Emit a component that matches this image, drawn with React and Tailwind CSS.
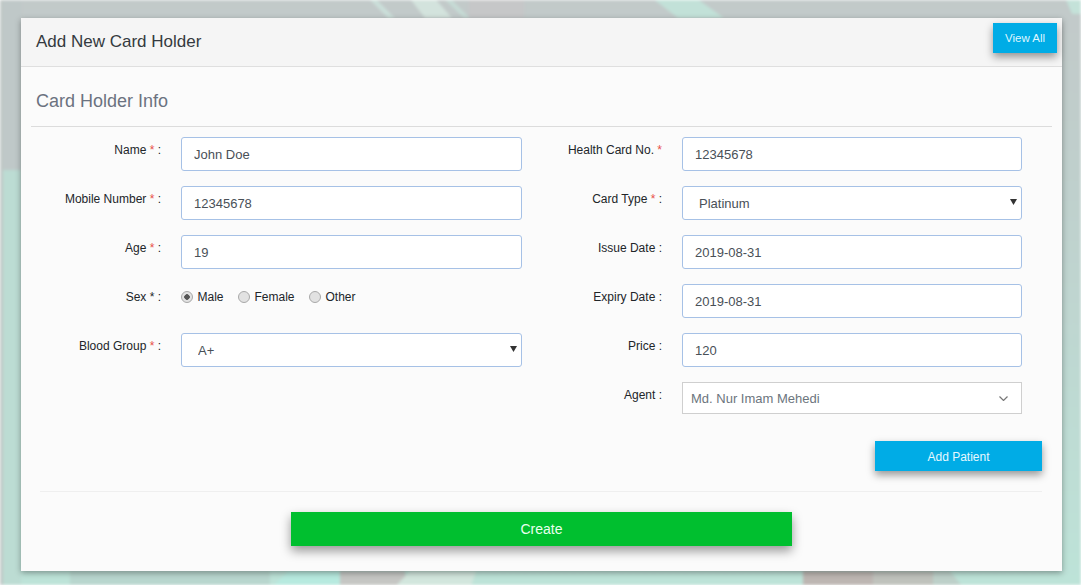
const inputClass =
  "h-[34px] w-full rounded-[3px] border border-[#a6c1e6] bg-white px-[12px] text-[13px] text-[#495057] outline-none";
const selectClass =
  "h-[34px] w-full appearance-none rounded-[3px] border border-[#a6c1e6] bg-white pl-[16px] pr-[24px] pt-[1px] text-[13px] text-[#495057] outline-none";
const labelClass = "pt-[5px] text-right text-[12px] leading-[16px] text-[#212529]";

function Star() {
  return <span className="text-[#e8504a]">*</span>;
}

function Row({ label, star, colon = true, children, className = "mb-[15px]", width = "w-[341px]" }) {
  return (
    <div className={`flex ${className}`}>
      <label className={`w-[130px] shrink-0 ${labelClass}`}>
        {label} {star && <Star />}
        {colon && " :"}
      </label>
      <div className={`ml-[20px] ${width}`}>{children}</div>
    </div>
  );
}

function Radio({ label, checked }) {
  return (
    <label className="flex items-center gap-[4.5px] text-[12px] leading-[14px] text-[#212529]">
      <input
        type="radio"
        name="sex"
        defaultChecked={checked}
        className="h-[12px] w-[12px] appearance-none rounded-full border border-[#a9a9a9] bg-[#e2e2e2] checked:bg-[radial-gradient(circle,#555_0,#555_2.5px,#e2e2e2_3px)]"
      />
      {label}
    </label>
  );
}

function SelectBox({ value }) {
  return (
    <div className="relative">
      <select className={selectClass}>
        <option>{value}</option>
      </select>
      <svg className="absolute right-[5px] top-[13px]" width="7" height="6" viewBox="0 0 7 6" fill="#333">
        <path d="M0 0h7L3.5 6z" />
      </svg>
    </div>
  );
}

function Background() {
  return (
    <svg className="absolute inset-0 h-full w-full blur-[1.5px]" viewBox="0 0 1081 585" preserveAspectRatio="none">
      <defs>
        <linearGradient id="side" x1="0" y1="0" x2="0" y2="1">
          <stop offset="0" stopColor="#c2c9c9" />
          <stop offset="0.3" stopColor="#bfcfcc" />
          <stop offset="1" stopColor="#bde3d8" />
        </linearGradient>
      </defs>
      <rect x="-5" y="-5" width="1091" height="595" fill="url(#side)" />
      <rect x="-5" y="-5" width="26" height="175" fill="#bfc8c8" />
      <rect x="-5" y="170" width="26" height="420" fill="#bcdcd3" />
      <rect x="-5" y="-5" width="8" height="595" fill="#c0c8c6" />
      <polygon points="365,-5 372,-5 395,18 388,18" fill="#cbdfd9" />
      <polygon points="407,-5 432,-5 452,18 425,18" fill="#d3e3dd" />
      <polygon points="440,-5 447,-5 470,18 464,18" fill="#c6dbd5" />
      <rect x="469" y="-5" width="55" height="23" fill="#c6c7c8" />
      <polygon points="648,-5 692,-5 724,18 678,18" fill="#c2e1d8" />
      <polygon points="1064,-5 1086,-5 1086,14 1072,14" fill="#c4e2d9" />
      <rect x="70" y="571" width="200" height="20" fill="#b8d6ce" />
      <polygon points="269,590 288,571 340,571 340,590" fill="#b7eadf" />
      <rect x="340" y="571" width="65" height="20" fill="#c5c6c3" />
      <polygon points="392,590 410,571 476,571 470,590" fill="#d2e6dd" />
      <rect x="803" y="571" width="70" height="20" fill="#bdb6b2" />
      <rect x="873" y="571" width="60" height="20" fill="#bfc2bc" />
      <polygon points="933,571 950,571 965,590 933,590" fill="#bdd0c9" />
    </svg>
  );
}

export default function App() {
  return (
    <div className="relative h-[585px] w-full overflow-hidden font-['Liberation_Sans',Arial,sans-serif]">
      <Background />
      <div className="relative ml-[21px] mt-[18px] inline-block h-[553px] w-[1041px] bg-[#fbfbfb] shadow-[0_2px_6px_rgba(0,0,0,0.35)]">
        <div className="flex h-[49px] justify-between border-b border-[#dfdfdf] bg-[#f5f5f5] pl-[15px] pr-[5px]">
          <h1 className="pt-[14px] text-[17px] leading-[20px] text-[#343a40]">Add New Card Holder</h1>
          <button className="mt-[5px] h-[30px] w-[64px] bg-[#00ace6] pt-[1px] text-[11.5px] text-[#dff6ff] shadow-[0_4px_8px_rgba(0,0,0,0.4)]">
            View All
          </button>
        </div>

        <div className="mx-[10px] h-[60px] border-b border-[#dcdcdc] pl-[5px] pt-[23px]">
          <h2 className="text-[18px] leading-[22px] text-[#6b7280]">Card Holder Info</h2>
        </div>

        <div className="flex pl-[10px] pt-[10px]">
          <div className="w-[501px]">
            <Row label="Name" star>
              <input className={inputClass} defaultValue="John Doe" />
            </Row>
            <Row label="Mobile Number" star>
              <input className={inputClass} defaultValue="12345678" />
            </Row>
            <Row label="Age" star>
              <input className={inputClass} defaultValue="19" />
            </Row>
            <Row label="Sex *">
              <div className="flex h-[34px] items-start gap-[14.5px] pt-[6px]">
                <Radio label="Male" checked />
                <Radio label="Female" />
                <Radio label="Other" />
              </div>
            </Row>
            <Row label="Blood Group" star>
              <SelectBox value="A+" />
            </Row>
          </div>
          <div className="w-[500px]">
            <Row label="Health Card No." star colon={false} width="w-[340px]">
              <input className={inputClass} defaultValue="12345678" />
            </Row>
            <Row label="Card Type" star width="w-[340px]">
              <SelectBox value="Platinum" />
            </Row>
            <Row label="Issue Date" width="w-[340px]">
              <input className={inputClass} defaultValue="2019-08-31" />
            </Row>
            <Row label="Expiry Date" width="w-[340px]">
              <input className={inputClass} defaultValue="2019-08-31" />
            </Row>
            <Row label="Price" width="w-[340px]">
              <input className={inputClass} defaultValue="120" />
            </Row>
            <Row label="Agent" className="" width="w-[340px]">
              <div className="flex h-[32px] items-center justify-between border border-[#cfcfcf] bg-white pl-[8px] pr-[13px] pt-[1px] text-[13px] text-[#6c757d]">
                Md. Nur Imam Mehedi
                <svg width="9" height="5" viewBox="0 0 9 5" fill="none" stroke="#777" strokeWidth="1.2">
                  <path d="M0.5 0.5l4 4 4-4" />
                </svg>
              </div>
            </Row>
          </div>
        </div>

        <div className="mr-[20px] mt-[27px] flex justify-end">
          <button className="h-[30px] w-[167px] bg-[#00ace6] pt-[1px] text-[12px] text-[#e6f8ff] shadow-[0_4px_8px_rgba(0,0,0,0.4)]">
            Add Patient
          </button>
        </div>

        <div className="ml-[19px] mr-[20px] mt-[20px] border-t border-[#efefef]" />

        <div className="mt-[20px] flex justify-center">
          <button className="h-[34px] w-[501px] bg-[#00bf2f] text-[14px] text-[#eafff0] shadow-[0_5px_10px_rgba(0,0,0,0.4)]">
            Create
          </button>
        </div>
      </div>
    </div>
  );
}
